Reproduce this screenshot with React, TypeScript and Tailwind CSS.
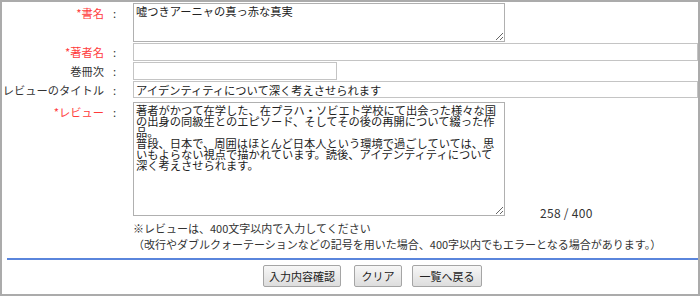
import React from "react";

const reviewText =
  "著者がかつて在学した、在プラハ・ソビエト学校にて出会った様々な国の出身の同級生とのエピソード、そしてその後の再開について綴った作品。\n普段、日本で、周囲はほとんど日本人という環境で過ごしていては、思いもよらない視点で描かれています。読後、アイデンティティについて深く考えさせられます。";

function Label({ text, req, top }: { text: string; req?: boolean; top?: boolean }) {
  return (
    <>
      <div
        className={
          "w-[102px] shrink-0 flex justify-end h-[18px] items-center " +
          (top ? "mt-[1px]" : "") +
          (req ? " text-[#ff3b3b]" : " text-[#333]")
        }
      >
        {req ? "*" : ""}
        {text}
      </div>
      <div className={"w-[29px] shrink-0 h-[18px] flex items-center pl-[9px] " + (top ? "mt-[1px]" : "")}>:</div>
    </>
  );
}

export default function App() {
  return (
    <div className="w-[700px] h-[296px] border-2 border-[#ababab] bg-white text-[#333] text-[11.25px] font-['Noto_Sans_CJK_JP','Noto_Sans',sans-serif] overflow-hidden">
      <div className="pt-px flex flex-col">
        <div className="flex">
          <Label text="書名" req top />
          <textarea
            readOnly
            defaultValue="嘘つきアーニャの真っ赤な真実"
            className="w-[372px] h-[39px] border border-[#b0b0b0] px-[2px] py-[1px] text-[11.25px] leading-[12px] text-[#222] outline-none resize-y"
          />
        </div>
        <div className="flex mt-[1px]">
          <Label text="著者名" req />
          <input readOnly className="flex-1 h-[18px] border border-[#c4c4c4] px-[2px] outline-none" />
        </div>
        <div className="flex mt-[1px]">
          <Label text="巻冊次" />
          <input readOnly className="w-[204px] h-[18px] border border-[#c4c4c4] px-[2px] outline-none" />
        </div>
        <div className="flex mt-[1px]">
          <Label text="レビューのタイトル" />
          <input
            readOnly
            defaultValue="アイデンティティについて深く考えさせられます"
            className="flex-1 h-[17px] border border-[#c4c4c4] px-[2px] text-[11.25px] text-[#222] outline-none"
          />
        </div>
        <div className="flex mt-[3px]">
          <Label text="レビュー" req top />
          <textarea
            readOnly
            defaultValue={reviewText}
            className="w-[372px] h-[114px] border border-[#b0b0b0] px-[2px] py-[2px] text-[11.25px] leading-[11px] text-[#222] outline-none resize-y"
          />
          <div className="self-end ml-[35px] mb-[-4px] text-[12px] leading-[14px] text-[#333] tracking-[0.3px]">258 / 400</div>
        </div>
        <div className="pl-[131px] mt-[4px] text-[11px] leading-[16px] text-[#333]">
          <div className="text-[#333]">※レビューは、400文字以内で入力してください</div>
          <div>（改行やダブルクォーテーションなどの記号を用いた場合、400字以内でもエラーとなる場合があります。）</div>
        </div>
        <div className="ml-[5px] mt-[6px] h-[2px] bg-[#5a85dc]" />
        <div className="flex mt-[5px] pl-[261px]">
          <button className="w-[78px] h-[22px] border border-[#a5a5a5] rounded-[2px] bg-gradient-to-b from-[#f7f7f7] to-[#dddddd] text-[11px] text-[#222]">
            入力内容確認
          </button>
          <button className="ml-[13px] w-[48px] h-[22px] border border-[#a5a5a5] rounded-[2px] bg-gradient-to-b from-[#f7f7f7] to-[#dddddd] text-[11px] text-[#222]">
            クリア
          </button>
          <button className="ml-[10px] w-[70px] h-[22px] border border-[#a5a5a5] rounded-[2px] bg-gradient-to-b from-[#f7f7f7] to-[#dddddd] text-[11px] text-[#222]">
            一覧へ戻る
          </button>
        </div>
      </div>
    </div>
  );
}
